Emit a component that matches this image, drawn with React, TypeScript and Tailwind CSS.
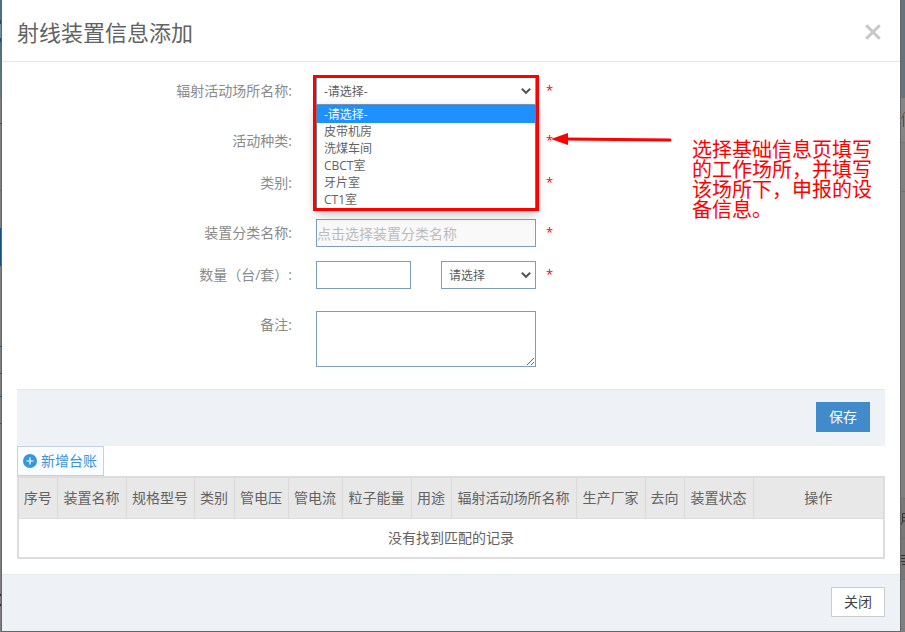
import type { ReactNode } from "react";

const columns = [
  { name: "序号", width: "w-[38px]" },
  { name: "装置名称", width: "w-[69px]" },
  { name: "规格型号", width: "w-[68px]" },
  { name: "类别", width: "w-[40px]" },
  { name: "管电压", width: "w-[54px]" },
  { name: "管电流", width: "w-[54px]" },
  { name: "粒子能量", width: "w-[69px]" },
  { name: "用途", width: "w-[40px]" },
  { name: "辐射活动场所名称", width: "w-[125px]" },
  { name: "生产厂家", width: "w-[69px]" },
  { name: "去向", width: "w-[39px]" },
  { name: "装置状态", width: "w-[69px]" },
  { name: "操作", width: "w-auto" },
];

const places = ["-请选择-", "皮带机房", "洗煤车间", "CBCT室", "牙片室", "CT1室"];

const field = "border border-[#7b9ebd] bg-white outline-none";

function Chevron() {
  return (
    <svg className="pointer-events-none absolute top-1/2 right-1 -mt-1 h-2 w-3" viewBox="0 0 12 8" fill="none" stroke="#555" strokeWidth="2">
      <path d="M1.8 1.8 6 5.8l4.2-4" />
    </svg>
  );
}

function Select({ id, label, options, className }: { id: string; label?: string; options: string[]; className: string }) {
  return (
    <div className={`relative ${className}`}>
      <select id={id} aria-label={label} className={`h-7 w-full appearance-none px-[7px] pt-0.5 text-xs text-[#5c5c5c] ${field}`}>
        {options.map((o) => (
          <option key={o}>{o}</option>
        ))}
      </select>
      <Chevron />
    </div>
  );
}

function Row({ id, label, required, children }: { id: string; label: string; required?: boolean; children: ReactNode }) {
  return (
    <div className="flex items-start">
      <label htmlFor={id} className="w-[275px] shrink-0 text-right leading-7 text-[#8a8a8a]">
        {label}:
      </label>
      <div className="relative ml-[24px] flex w-[220px] shrink-0 justify-between">{children}</div>
      {required && <span className="ml-[10px] text-[13px] leading-[26px] text-[#f00]">*</span>}
    </div>
  );
}

export default function App() {
  return (
    <div className="flex min-h-screen overflow-hidden bg-[#7f7f7f] font-['Open_Sans','Noto_Sans_CJK_SC',sans-serif] text-sm text-[#626262]">
      <div className="flex w-[2px] shrink-0 flex-col border-r border-[#666]">
        <div className="h-[20px] bg-[#4d7181]" />
        <div className="h-[22px] border-y-4 border-[#1d4c73] bg-[#6d8d99]" />
        <div className="h-[56px] bg-linear-to-b from-[#4d7181] to-[#6c7d83]" />
        <div className="h-[26px] border-b border-[#24496f]" />
        <div className="h-[67px] border-b border-[#666]" />
        <div className="mt-[37px] h-[38px] bg-[#15507f]" />
        <div className="h-[81px] border-b border-[#24496f]" />
        <div className="h-[27px] border-b border-[#444]" />
        <div className="h-[23px] border-b border-[#24496f]" />
        <div className="h-[27px] border-b border-[#444]" />
        <div className="mt-[170px] h-[12px] border-y-2 border-[#333]" />
      </div>

      <main className="flex min-w-0 flex-1 flex-col border-b border-[#666] bg-white">
        <header className="flex h-[62px] items-center justify-between border-b border-[#e5e5e5] px-[15px] pt-0.5">
          <h1 className="text-[22px] leading-7">射线装置信息添加</h1>
          <button type="button" aria-label="关闭窗口" className="mr-1">
            <svg className="size-4" viewBox="0 0 16 16" stroke="#c8c8c8" strokeWidth="3">
              <path d="m1.2 1.2 13.6 13.6M14.8 1.2 1.2 14.8" />
            </svg>
          </button>
        </header>

        <div className="flex-1 p-[15px]">
          <form id="device-form" className="relative flex flex-col">
            <Row id="place" label="辐射活动场所名称" required>
              <Select id="place" options={places} className="w-full" />
              <ul className="absolute top-7 left-0 z-10 h-[104px] w-full border border-[#777] bg-white text-xs leading-[17px] shadow-[0_4px_10px_rgba(0,0,0,0.3)]">
                {places.map((p, i) => (
                  <li key={p} className={i === 0 ? "bg-[#1e90ff] px-[7px] text-white" : "px-[7px]"}>
                    {p}
                  </li>
                ))}
              </ul>
              <div className="pointer-events-none absolute -top-0.5 -left-[3px] z-20 h-[136px] w-[226px] border-3 border-[#f00]" />
            </Row>
            <div className="mt-[22px]">
              <Row id="activity" label="活动种类" required>
                <Select id="activity" options={[]} className="w-full" />
              </Row>
            </div>
            <div className="mt-[14px]">
              <Row id="category" label="类别" required>
                <Select id="category" options={[]} className="w-full" />
              </Row>
            </div>
            <div className="mt-[22px]">
              <Row id="device" label="装置分类名称" required>
                <input id="device" readOnly placeholder="点击选择装置分类名称" className="h-7 w-full border border-[#7b9ebd] bg-[#f9f9f9] pt-px outline-none placeholder:text-[#bbb]" />
              </Row>
            </div>
            <div className="mt-[14px]">
              <Row id="amount" label="数量（台/套）" required>
                <input id="amount" className={`h-7 w-[95px] px-1 ${field}`} />
                <Select id="unit" label="单位" options={["请选择"]} className="w-[95px]" />
              </Row>
            </div>
            <div className="mt-[22px]">
              <Row id="remark" label="备注">
                <textarea id="remark" className={`h-14 w-full resize px-1 ${field}`} />
              </Row>
            </div>

            <svg className="pointer-events-none absolute top-[54px] left-[534px] h-4 w-[122px]" viewBox="0 0 122 16">
              <path d="M0 8 17 2v12Z" fill="#f00" />
              <path d="m15 8 104 1" stroke="#f00" strokeWidth="3" strokeLinecap="round" />
            </svg>
            <p className="absolute top-[63px] left-[675px] w-[180px] text-xl leading-5 text-[#f00]">
              选择基础信息页填写的工作场所，并填写该场所下，申报的设备信息。
            </p>
          </form>

          <div className="mt-[22px] flex h-[57px] items-start justify-end border-t border-[#e2e8ee] bg-[#eef2f7] px-[15px] pt-3">
            <button form="device-form" className="h-[30px] w-[54px] bg-[#428bca] text-white">保存</button>
          </div>

          <button type="button" className="flex h-[30px] w-[87px] items-center gap-1 border border-[#c3d2dd] bg-[#f9fdff] px-[5px] whitespace-nowrap text-[#3c95d6]">
            <svg className="size-[14px] shrink-0" viewBox="0 0 14 14">
              <circle cx="7" cy="7" r="7" fill="#3598dc" />
              <path d="M3.5 7h7M7 3.5v7" stroke="#fff" strokeWidth="1.2" />
            </svg>
            新增台账
          </button>

          <div className="border-2 border-[#ddd]">
            <table className="w-full table-fixed border-collapse">
              <thead>
                <tr className="h-[40px] border-b border-[#ddd] bg-[#e8e8e8]">
                  {columns.map((c) => (
                    <th key={c.name} className={`border-r border-[#d9d9d9] p-0 font-normal whitespace-nowrap last:border-r-0 ${c.width}`}>
                      {c.name}
                    </th>
                  ))}
                </tr>
              </thead>
              <tbody>
                <tr className="h-[39px]">
                  <td colSpan={columns.length} className="p-0 text-center">
                    没有找到匹配的记录
                  </td>
                </tr>
              </tbody>
            </table>
          </div>
        </div>

        <footer className="flex h-[57px] items-start justify-end border-t border-[#e2e8ee] bg-[#eef2f7] px-[15px] pt-3">
          <button type="button" className="h-[30px] w-[54px] border border-[#ccc] bg-white text-[#444]">关闭</button>
        </footer>
      </main>

      <div className="flex w-[5px] shrink-0 flex-col border-l border-[#666]">
        <div className="h-[98px] bg-[#63747a]" />
        <div className="flex h-[45px] items-center border-b border-[#777] bg-[#858585]">
          <svg className="h-4 w-1" viewBox="0 0 4 16" fill="none">
            <path d="M3.5 0 .5 7" stroke="#6b5544" />
            <path d="M2.5 4v11" stroke="#31597c" />
          </svg>
        </div>
        <div className="h-[49px] border-b border-[#707070]" />
        <div className="mt-[306px] flex h-[41px] items-center border-y border-[#707070] bg-[#777]">
          <svg className="h-3 w-1" viewBox="0 0 4 12" fill="none" stroke="#333">
            <path d="M4 .5H1.500v8L.5 11.500M1.500 4.500H4M1.500 8H4" />
          </svg>
        </div>
        <div className="flex h-[41px] items-center border-b border-[#707070] bg-[#777]">
          <svg className="h-3 w-1" viewBox="0 0 4 12" fill="none" stroke="#333">
            <path d="M0 2.500h4M0 5.500h4M0 8.500h4M1 11.500h3" />
          </svg>
        </div>
      </div>
    </div>
  );
}
